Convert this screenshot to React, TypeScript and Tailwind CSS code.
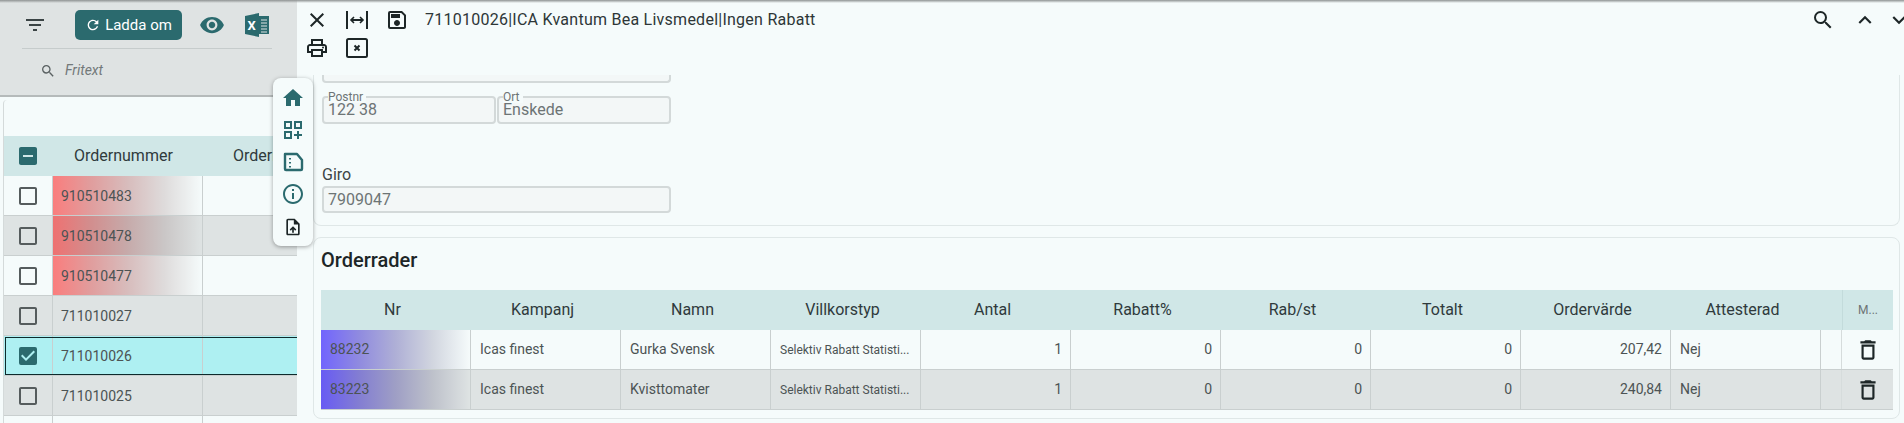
import React from "react";
import {
  MdCheckBox,
  MdCheckBoxOutlineBlank,
  MdClose,
  MdDeleteOutline,
  MdExpandLess,
  MdExpandMore,
  MdFilterList,
  MdHome,
  MdIndeterminateCheckBox,
  MdInfoOutline,
  MdOutlineDashboardCustomize,
  MdOutlinePrint,
  MdOutlineSave,
  MdOutlineUploadFile,
  MdRefresh,
  MdSearch,
  MdVisibility,
} from "react-icons/md";

const orders = [
  { nr: "910510483", red: true, alt: false },
  { nr: "910510478", red: true, alt: true },
  { nr: "910510477", red: true, alt: false },
  { nr: "711010027", red: false, alt: true },
  { nr: "711010026", red: false, alt: false, selected: true },
  { nr: "711010025", red: false, alt: true },
  { nr: "", red: false, alt: false, empty: true },
];

const orderRows = [
  { nr: "88232", name: "Gurka Svensk", value: "207,42", alt: false },
  { nr: "83223", name: "Kvisttomater", value: "240,84", alt: true },
];

const headers = ["Nr", "Kampanj", "Namn", "Villkorstyp", "Antal", "Rabatt%", "Rab/st", "Totalt", "Ordervärde", "Attesterad"];

const ExcelIcon = () => (
  <svg width="24" height="24" viewBox="0 0 24 24" className="ml-[20px] mt-[3px] text-[#2b6a6e]">
    <path d="M0 3 L14 0 V24 L0 21 Z" fill="currentColor" />
    <path d="M14 3 H24 V21 H14 Z" fill="currentColor" />
    <path d="M16 7h6M16 10h6M16 13h6M16 16h6M16 19h6" stroke="#dfe3e3" strokeWidth="1" />
    <text x="2.5" y="16.5" fontSize="13" fontWeight="700" fill="#ffffff" fontFamily="Roboto, sans-serif">X</text>
  </svg>
);

const WidthIcon = () => (
  <svg width="24" height="24" viewBox="0 0 24 24" fill="none" stroke="currentColor" strokeWidth="2">
    <path d="M2 3v18M22 3v18" />
    <path d="M7 12h10" />
    <path d="M9 9l-3 3 3 3M15 9l3 3-3 3" strokeWidth="1.6" />
  </svg>
);

const ClosedBoxIcon = () => (
  <svg width="24" height="24" viewBox="0 0 24 24" fill="none" stroke="currentColor" strokeWidth="2">
    <rect x="2" y="3" width="20" height="18" rx="1.5" />
    <path d="M9.5 9.5l5 5M14.5 9.5l-5 5" />
  </svg>
);

const SheetIcon = () => (
  <svg width="24" height="24" viewBox="0 0 24 24" fill="none" stroke="currentColor" strokeWidth="2.4">
    <path d="M4 4h12l5 6v9a1 1 0 0 1-1 1H5a1 1 0 0 1-1-1V4z" strokeLinejoin="round" />
    <path d="M9 8v1.6M9 12v1.6M9 16v1.6" strokeWidth="2" />
  </svg>
);

const Field = ({ label, value, className }: { label: string; value: string; className: string }) => (
  <div className={"relative h-[28px] rounded border-2 border-[#d3d9d9] bg-[#f3f7f7] pl-[4px] text-[16px] leading-[24px] text-[#6d7475] " + className}>
    <span className="absolute -top-[7px] left-[4px] bg-[#f5fbfb] pr-[3px] text-[12px] leading-[12px] text-[#6d7475]">{label}</span>
    <span className="block">{value}</span>
  </div>
);

const LeftPane = () => (
  <aside className="flex h-full w-[297px] shrink-0 flex-col overflow-hidden bg-[#f5fbfb]">
    <div className="h-[97px] shrink-0 border-b-2 border-[#b5baba] bg-[#dfe3e3] pl-[22px] pr-[25px] pt-[10px]">
      <div className="flex h-[39px] items-start border-b border-[#c6cccc]">
        <MdFilterList size={24} className="ml-[1px] mt-[3px] text-[#3b4445]" />
        <button className="ml-[28px] flex h-[30px] w-[107px] items-center justify-center gap-[4px] rounded-[5px] bg-[#2b6a6e] text-[15px] text-white">
          <MdRefresh size={16} />
          Ladda om
        </button>
        <MdVisibility size={26} className="ml-[17px] mt-[2px] text-[#2b6a6e]" />
        <ExcelIcon />
      </div>
      <div className="mt-[11px] flex items-center pl-[18px] text-[14px] italic text-[#73797a]">
        <MdSearch size={16} className="text-[#5a6162]" />
        <span className="ml-[9px]">Fritext</span>
      </div>
    </div>
    <div className="ml-[3px] mt-[3px] w-[600px] rounded-tl border-l border-[#d4dada] pt-[36px]">
      <div className="grid h-[40px] grid-cols-[49px_150px_1fr] items-center bg-[#d0e7e7] text-[16px] text-[#2f3a3c]">
        <MdIndeterminateCheckBox size={24} className="ml-[12px] text-[#2b6a6e]" />
        <span className="pl-[21px]">Ordernummer</span>
        <span className="pl-[30px]">Orderrader</span>
      </div>
      {orders.map((o) => (
        <div
          key={o.nr || "empty"}
          className={
            "grid h-[40px] grid-cols-[49px_150px_1fr] items-center border-b border-[#c9cfcf] text-[14px] text-[#4c5354] " +
            (o.selected ? "bg-[#aef0f2] outline outline-1 -outline-offset-2 outline-[#0e2a2c] " : o.alt ? "bg-[#dee3e3] " : "bg-[#f5fbfb] ")
          }
        >
          <span className="flex h-full items-center border-r border-[#c9cfcf] pl-[12px]">
            {!o.empty &&
              (o.selected ? (
                <MdCheckBox size={24} className="text-[#2b6a6e]" />
              ) : (
                <MdCheckBoxOutlineBlank size={24} className="text-[#555c5d]" />
              ))}
          </span>
          <span
            className={
              "flex h-full items-center border-r border-[#c9cfcf] pl-[8px] pt-[1px] " +
              (o.red ? "bg-[linear-gradient(to_right,rgba(255,0,0,0.5),rgba(191,0,0,0.375)_25%,rgba(128,0,0,0.25)_50%,rgba(64,0,0,0.125)_75%,rgba(0,0,0,0))]" : "")
            }
          >
            {o.nr}
          </span>
          <span />
        </div>
      ))}
    </div>
  </aside>
);

const FloatingMenu = () => (
  <nav className="absolute left-[273px] top-[78px] flex h-[168px] w-[40px] flex-col items-center gap-[8px] rounded-lg bg-[#f5fbfb] pt-[8px] shadow-[0_1px_4px_rgba(0,0,0,0.35)]">
    <MdHome size={24} className="text-[#2b6a6e]" />
    <MdOutlineDashboardCustomize size={24} className="text-[#2b6a6e]" />
    <span className="text-[#2b6a6e]"><SheetIcon /></span>
    <MdInfoOutline size={24} className="text-[#2b6a6e]" />
    <MdOutlineUploadFile size={20} className="mt-[3px] text-[#1c2526]" />
  </nav>
);

const Header = () => (
  <header className="flex h-[75px] shrink-0 pt-[6px] text-[#1d2627]">
    <div className="flex-1">
      <div className="flex h-[28px] items-center">
        <span className="flex w-[40px] justify-center"><MdClose size={24} /></span>
        <span className="flex w-[40px] justify-center"><WidthIcon /></span>
        <span className="flex w-[40px] justify-center"><MdOutlineSave size={24} /></span>
        <span className="ml-[8px] text-[16px] tracking-[0.25px] text-[#2d3637]">711010026|ICA Kvantum Bea Livsmedel|Ingen Rabatt</span>
      </div>
      <div className="flex h-[28px] items-center">
        <span className="flex w-[40px] justify-center"><MdOutlinePrint size={24} /></span>
        <span className="flex w-[40px] justify-center"><ClosedBoxIcon /></span>
      </div>
    </div>
    <div className="flex h-[28px] items-center">
      <MdSearch size={24} className="mr-[17px]" />
      <MdExpandLess size={26} className="mr-[8px]" />
      <MdExpandMore size={26} className="mr-[-8px]" />
    </div>
  </header>
);

const OrderTable = () => (
  <div className="mt-[17px] w-[1572px] text-[14px] text-[#4c5354]">
    <div className="grid h-[40px] grid-cols-[repeat(10,150px)_21px_51px] items-center bg-[#d0e7e7] text-[16px] text-[#2f3a3c]">
      {headers.map((h) => (
        <span key={h} className="pr-[7px] text-center">{h}</span>
      ))}
      <span />
      <span className="h-full border-l border-[#c3dbdb] text-center text-[12px] leading-[40px] text-[#6d7475]">M...</span>
    </div>
    {orderRows.map((r) => (
      <div key={r.nr} className={"grid h-[40px] grid-cols-[repeat(10,150px)_21px_51px] items-center border-b border-[#c9cfcf] " + (r.alt ? "bg-[#dee3e3]" : "bg-[#f5fbfb]")}>
        <span className="flex h-full items-center border-r border-[#c9cfcf] bg-[linear-gradient(to_right,rgba(25,0,255,0.6),rgba(19,0,191,0.45)_25%,rgba(12,0,128,0.3)_50%,rgba(6,0,64,0.15)_75%,rgba(0,0,0,0))] pl-[9px]">{r.nr}</span>
        <span className="flex h-full items-center border-r border-[#c9cfcf] pl-[9px]">Icas finest</span>
        <span className="flex h-full items-center border-r border-[#c9cfcf] pl-[9px]">{r.name}</span>
        <span className="flex h-full items-center border-r border-[#c9cfcf] pl-[9px] text-[12px]">Selektiv Rabatt Statisti...</span>
        <span className="flex h-full items-center justify-end border-r border-[#c9cfcf] pr-[8px]">1</span>
        <span className="flex h-full items-center justify-end border-r border-[#c9cfcf] pr-[8px]">0</span>
        <span className="flex h-full items-center justify-end border-r border-[#c9cfcf] pr-[8px]">0</span>
        <span className="flex h-full items-center justify-end border-r border-[#c9cfcf] pr-[8px]">0</span>
        <span className="flex h-full items-center justify-end border-r border-[#c9cfcf] pr-[8px]">{r.value}</span>
        <span className="flex h-full items-center border-r border-[#c9cfcf] pl-[9px]">Nej</span>
        <span className="h-full border-r border-[#d6dcdc]" />
        <span className="flex h-full items-center justify-center">
          <MdDeleteOutline size={26} className="text-[#1d2627]" />
        </span>
      </div>
    ))}
  </div>
);

const Main = () => (
  <main className="flex h-full flex-1 flex-col overflow-hidden bg-[#f5fbfb] font-normal">
    <Header />
    <div className="ml-[16px] mr-[4px] h-[151px] shrink-0 rounded-b-lg border-x border-b border-[#dfe7e7] pl-[8px]">
      <div className="h-[8px] w-[349px] rounded-b border-x-2 border-b-2 border-[#d3d9d9] bg-[#f3f7f7]" />
      <div className="mt-[13px] flex w-[349px] gap-[1px]">
        <Field label="Postnr" value="122 38" className="w-[174px]" />
        <Field label="Ort" value="Enskede" className="w-[174px]" />
      </div>
      <div className="mt-[40px] h-[22px] text-[16px] leading-[22px] text-[#3c4546]">Giro</div>
      <div className="h-[27px] w-[349px] rounded border-2 border-[#d3d9d9] bg-[#f3f7f7] pl-[4px] text-[16px] leading-[23px] text-[#6d7475]">7909047</div>
    </div>
    <section className="ml-[16px] mr-[4px] mt-[11px] h-[182px] shrink-0 rounded-lg border border-[#dfe7e7] pl-[7px] pt-[9px]">
      <h2 className="h-[26px] text-[20px] font-medium leading-[26px] text-[#1d2627]">Orderrader</h2>
      <OrderTable />
    </section>
  </main>
);

export default function App() {
  return (
    <div className="relative flex h-[423px] w-[1904px] overflow-hidden bg-white font-['Roboto',sans-serif]">
      <LeftPane />
      <Main />
      <FloatingMenu />
      <div className="absolute inset-x-0 top-0 h-[3px] bg-gradient-to-b from-[#8f9393] to-transparent" />
    </div>
  );
}
